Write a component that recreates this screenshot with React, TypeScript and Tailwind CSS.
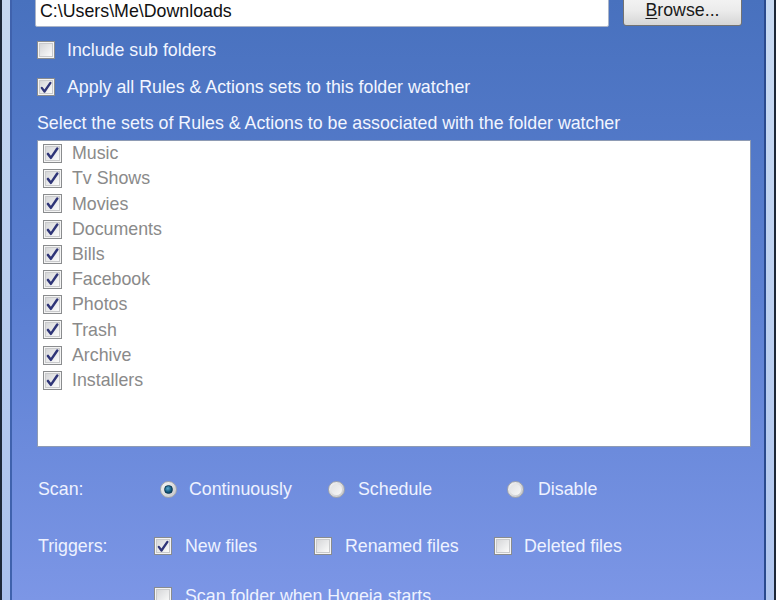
import React from "react";

const font = "font-['Liberation_Sans',Arial,sans-serif]";

function CheckBox({ checked, size = 18 }: { checked?: boolean; size?: number }) {
  return (
    <div
      className="flex shrink-0 items-center justify-center border border-[#8a8c8e] bg-[#f4f4f4] p-[1px]"
      style={{ width: size, height: size }}
    >
      <div className="flex h-full w-full items-center justify-center border border-[#c9cacc] bg-gradient-to-br from-[#d6d7d9] to-[#fbfbfb]">
        {checked ? (
          <svg viewBox="0 0 12 12" className="h-[13px] w-[13px]">
            <path
              d="M1.8 6.4 L4.5 10 L10.4 1.4"
              fill="none"
              stroke="#2f3578"
              strokeWidth="2.3"
              strokeLinejoin="round"
              strokeLinecap="round"
            />
          </svg>
        ) : null}
      </div>
    </div>
  );
}

function Radio({ selected }: { selected?: boolean }) {
  return (
    <div className="flex h-[17px] w-[17px] shrink-0 items-center justify-center rounded-full border border-[#a3a6ab] bg-gradient-to-br from-[#f6f6f6] to-[#c4c6c9]">
      {selected ? (
        <div className="h-[9px] w-[9px] rounded-full border border-[#0b3a55] bg-[radial-gradient(circle_at_40%_35%,#5aa9d0,#0f5478_60%,#0a3550)]" />
      ) : (
        <div className="h-[11px] w-[11px] rounded-full bg-gradient-to-br from-[#e0e1e3] to-[#f8f8f8]" />
      )}
    </div>
  );
}

const sets = [
  "Music",
  "Tv Shows",
  "Movies",
  "Documents",
  "Bills",
  "Facebook",
  "Photos",
  "Trash",
  "Archive",
  "Installers",
];

export default function App() {
  return (
    <div className={`flex h-[600px] w-[776px] overflow-hidden ${font} text-[17.8px] text-[#f2f5ff]`}>
      {/* left window frame */}
      <div className="flex w-[12px] shrink-0">
        <div className="w-[2px] bg-[#1d2838]" />
        <div className="w-[8px] bg-gradient-to-b from-[#c6d8ef] via-[#b9cdee] to-[#a9c0ec]" />
        <div className="w-[2px] bg-[#3f62ad]" />
      </div>

      <div className="flex min-h-0 flex-1 flex-col overflow-hidden bg-gradient-to-b from-[#4871be] via-[#5c80d2] to-[#7c96e6] pl-[23px] pr-[13px] [&>*]:shrink-0">
        {/* path row */}
        <div className="flex h-[27px] items-start">
          <div className="mt-[-8px] flex h-[35px] w-[574px] items-center rounded-[2px] border border-[#aab4c8] bg-white pl-[4px] pt-[3px] text-[#111]">
            C:\Users\Me\Downloads
          </div>
          <div className="ml-[14px] mt-[-4px] flex h-[30px] w-[119px] items-center justify-center rounded-[3px] border border-[#727272] bg-gradient-to-b from-[#f4f4f4] via-[#ebebeb] to-[#d6d6d6] pb-[2px] text-[#1a1a1a]">
            <span className="underline decoration-1 underline-offset-2">B</span>
            rowse...
          </div>
        </div>

        <div className="ml-[2px] mt-[14px] flex h-[18px] items-center">
          <CheckBox />
          <span className="ml-[12px]">Include sub folders</span>
        </div>
        <div className="ml-[2px] mt-[19px] flex h-[18px] items-center">
          <CheckBox checked />
          <span className="ml-[12px]">Apply all Rules &amp; Actions sets to this folder watcher</span>
        </div>
        <div className="ml-[2px] mt-[18px] flex h-[18px] items-center">
          Select the sets of Rules &amp; Actions to be associated with the folder watcher
        </div>

        {/* list box */}
        <div className="ml-[2px] mt-[8px] h-[307px] border border-[#8e9bb4] bg-white pl-[5px] text-[#8a8a8a]">
          {sets.map((s) => (
            <div key={s} className="flex h-[25.2px] items-center">
              <CheckBox checked size={19} />
              <span className="ml-[10px]">{s}</span>
            </div>
          ))}
        </div>

        {/* scan */}
        <div className="ml-[3px] mt-[33px] flex h-[18px] items-center text-[#eef2ff]">
          <span className="w-[122px]">Scan:</span>
          <div className="flex w-[168px] items-center">
            <Radio selected />
            <span className="ml-[12px]">Continuously</span>
          </div>
          <div className="flex w-[179px] items-center">
            <Radio />
            <span className="ml-[13px]">Schedule</span>
          </div>
          <div className="flex items-center">
            <Radio />
            <span className="ml-[14px]">Disable</span>
          </div>
        </div>

        {/* triggers */}
        <div className="ml-[3px] mt-[39px] flex h-[18px] items-center text-[#eef2ff]">
          <span className="w-[116px]">Triggers:</span>
          <div className="flex w-[160px] items-center">
            <CheckBox checked />
            <span className="ml-[13px]">New files</span>
          </div>
          <div className="flex w-[180px] items-center">
            <CheckBox />
            <span className="ml-[13px]">Renamed files</span>
          </div>
          <div className="flex items-center">
            <CheckBox />
            <span className="ml-[12px]">Deleted files</span>
          </div>
        </div>

        <div className="ml-[119px] mt-[32px] flex h-[18px] items-center text-[#eef2ff]">
          <CheckBox />
          <span className="ml-[13px]">Scan folder when Hygeia starts</span>
        </div>
      </div>

      {/* right window frame */}
      <div className="flex w-[12px] shrink-0">
        <div className="w-[2px] bg-[#2a4a8e]" />
        <div className="w-[8px] bg-gradient-to-b from-[#c8daf2] via-[#bcd0f0] to-[#aec4ee]" />
        <div className="w-[2px] bg-[#1d2838]" />
      </div>
    </div>
  );
}
